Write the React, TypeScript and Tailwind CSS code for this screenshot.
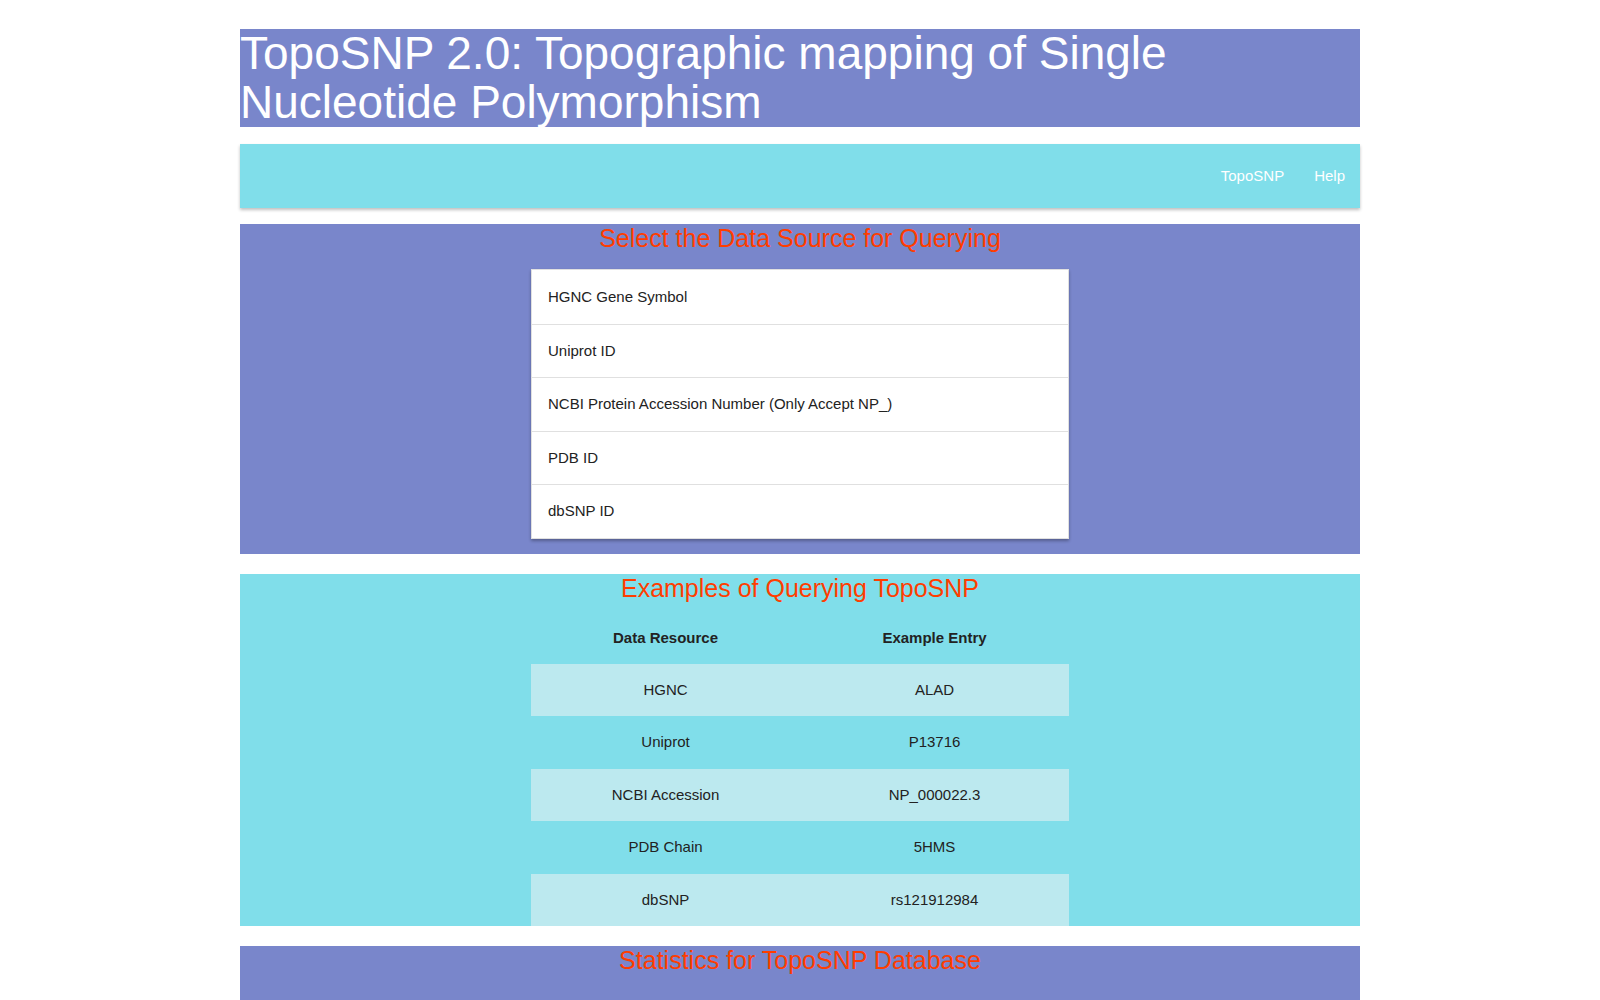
const sources = ['HGNC Gene Symbol', 'Uniprot ID', 'NCBI Protein Accession Number (Only Accept NP_)', 'PDB ID', 'dbSNP ID'];
const examples = [
  ['HGNC', 'ALAD'],
  ['Uniprot', 'P13716'],
  ['NCBI Accession', 'NP_000022.3'],
  ['PDB Chain', '5HMS'],
  ['dbSNP', 'rs121912984'],
];

export default function App() {
  return (
    <div className="min-h-[1000px] bg-white font-[Liberation_Sans] text-[#222]">
      <div className="mx-auto w-[1120px] pt-[29px]">
        <h1 className="bg-[#7986cb] text-[46px] leading-[49px] text-white">
          TopoSNP 2.0: Topographic mapping of Single Nucleotide Polymorphism
        </h1>
        <nav className="mt-[17px] flex h-[64px] items-center justify-end bg-[#80deea] pr-[15px] text-[15px] text-white shadow-[0_2px_3px_rgba(0,0,0,0.25)]">
          <a className="px-[15px]">TopoSNP</a>
          <a className="pl-[15px]">Help</a>
        </nav>
        <section className="mt-[16px] bg-[#7986cb] pb-[15px] pt-[1px]">
          <h2 className="text-center text-[25px] leading-[27px] text-[#ff3d00]">Select the Data Source for Querying</h2>
          <ul className="mx-auto mt-[17px] w-[538px] border border-[#e0e0e0] bg-white shadow-[0_2px_3px_rgba(0,0,0,0.3)]">
            {sources.map((s, i) => (
              <li key={s} className={`flex h-[53.5px] items-center px-[16px] text-[15px] ${i ? 'border-t border-[#e0e0e0]' : ''}`}>{s}</li>
            ))}
          </ul>
        </section>
        <section className="mt-[20px] bg-[#80deea] pt-[1px]">
          <h2 className="text-center text-[25px] leading-[27px] text-[#ff3d00]">Examples of Querying TopoSNP</h2>
          <table className="mx-auto mt-[11px] w-[538px] text-center text-[15px]">
            <thead>
              <tr className="h-[51px] font-bold"><th className="w-1/2">Data Resource</th><th>Example Entry</th></tr>
            </thead>
            <tbody>
              {examples.map(([a, b], i) => (
                <tr key={a} className={`h-[52.5px] ${i % 2 === 0 ? 'bg-[#bce9ef]' : ''}`}><td>{a}</td><td>{b}</td></tr>
              ))}
            </tbody>
          </table>
        </section>
        <section className="mt-[20px] h-[60px] bg-[#7986cb] pt-[1px]">
          <h2 className="text-center text-[25px] leading-[27px] text-[#ff3d00]">Statistics for TopoSNP Database</h2>
        </section>
      </div>
    </div>
  );
}
